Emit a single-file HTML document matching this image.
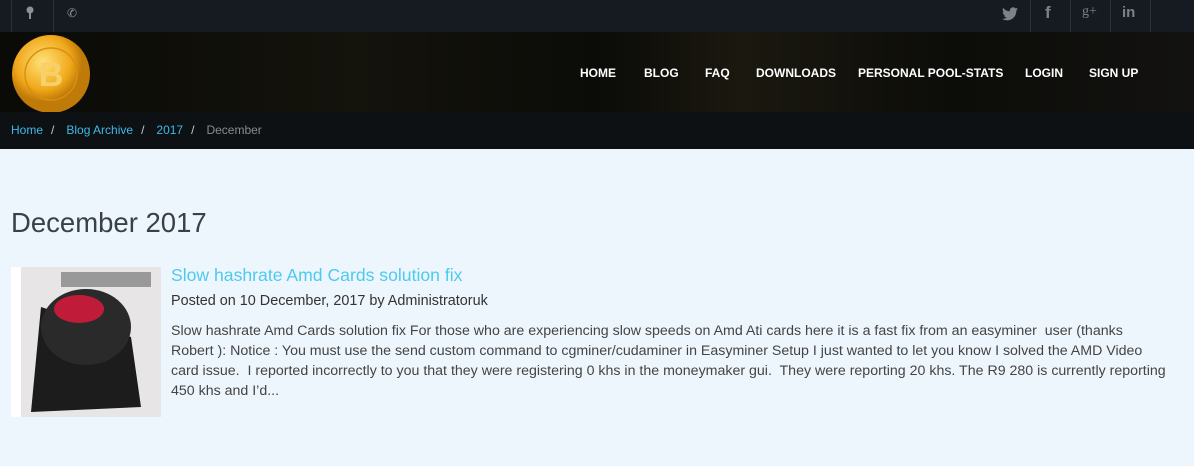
<!DOCTYPE html>
<html><head><meta charset="utf-8"><style>
*{margin:0;padding:0;box-sizing:border-box}
body{width:1194px;height:466px;overflow:hidden;background:#eef6fd;font-family:"Liberation Sans",sans-serif}
.top{position:absolute;left:0;top:0;width:1194px;height:32px;background:#151b20}
.top .s{position:absolute;top:0;height:32px;border-left:1px solid #2a3036}
.hdr{position:absolute;left:0;top:32px;width:1194px;height:80px;background:linear-gradient(90deg,#0a0a07,#14130c 30%,#0b0b08 50%,#1a180f 62%,#0c0c09 80%,#131210);}
.nav{position:absolute;top:34px;font-size:12px;font-weight:bold;color:#fff;}
.bc{position:absolute;left:0;top:112px;width:1194px;height:37px;background:#0e1114;font-size:12px;line-height:37px;padding-left:11px;color:#8a8a8a}
.bc a{color:#3fb8e6;text-decoration:none}
.bc i{font-style:normal;color:#ccc;margin:0 12px 0 8px}
h1{position:absolute;left:11px;top:207px;font-size:27.5px;font-weight:normal;color:#3b4045}
.th{position:absolute;left:11px;top:267px;width:150px;height:150px;background:#fff}
.th div{position:absolute;left:10px;top:0;width:140px;height:150px;background:#e8e5e6}
.t{position:absolute;left:171px;top:265px;font-size:17.6px;color:#4ccaf0}
.m{position:absolute;left:171px;top:293px;font-size:14.4px;color:#333}
.e{position:absolute;left:171px;top:321px;width:1020px;font-size:14.2px;line-height:20px;color:#444;white-space:nowrap}
</style></head><body>
<div class="top">
<div class="s" style="left:11px"></div><div class="s" style="left:53px"></div>
<svg style="position:absolute;left:25px;top:6px" width="10" height="14"><circle cx="5" cy="4" r="3.5" fill="#8b9196"/><rect x="4" y="6" width="2" height="7" fill="#8b9196"/></svg>
<span style="position:absolute;left:67px;top:6px;color:#8b9196;font-size:12px">&#9990;</span>
<div class="s" style="left:1030px"></div><div class="s" style="left:1070px"></div><div class="s" style="left:1110px"></div><div class="s" style="left:1150px"></div>
<svg style="position:absolute;left:1002px;top:7px" width="16" height="14" viewBox="0 0 24 20"><path d="M24 2.4a10 10 0 0 1-2.8.8A5 5 0 0 0 23.3.4a10 10 0 0 1-3.1 1.2A4.9 4.9 0 0 0 11.8 6 14 14 0 0 1 1.7.9a4.9 4.9 0 0 0 1.5 6.6A4.9 4.9 0 0 1 1 6.9a4.9 4.9 0 0 0 3.9 4.9 5 5 0 0 1-2.2.1 4.9 4.9 0 0 0 4.6 3.4A9.9 9.9 0 0 1 0 17.3 14 14 0 0 0 7.5 19.5c9.1 0 14-7.5 14-14v-.6A10 10 0 0 0 24 2.4z" fill="#7d8287"/></svg>
<span style="position:absolute;left:1045px;top:3px;color:#7d8287;font-size:17px;font-weight:bold">f</span>
<span style="position:absolute;left:1082px;top:4px;color:#7d8287;font-size:14px;font-family:'Liberation Serif',serif">g+</span>
<span style="position:absolute;left:1122px;top:4px;color:#7d8287;font-size:15px;font-weight:bold">in</span>
</div>
<div class="hdr">
<svg style="position:absolute;left:11px;top:2px" width="80" height="80"><defs><radialGradient id="g" cx="40%" cy="35%"><stop offset="0" stop-color="#ffe27a"/><stop offset=".7" stop-color="#f0a81a"/><stop offset="1" stop-color="#c07a08"/></radialGradient></defs><circle cx="40" cy="40" r="39" fill="url(#g)"/><circle cx="40" cy="40" r="26" fill="none" stroke="#d98f10" stroke-width="1.5"/><text x="40" y="52" text-anchor="middle" font-size="34" font-weight="bold" fill="#f8d06a" font-family="Liberation Sans">B</text></svg>
<span class="nav" style="left:580px">HOME</span>
<span class="nav" style="left:644px">BLOG</span>
<span class="nav" style="left:705px">FAQ</span>
<span class="nav" style="left:756px">DOWNLOADS</span>
<span class="nav" style="left:858px">PERSONAL POOL-STATS</span>
<span class="nav" style="left:1025px">LOGIN</span>
<span class="nav" style="left:1089px">SIGN UP</span>
</div>
<div class="bc"><a>Home</a><i>/</i><a>Blog Archive</a><i>/</i><a>2017</a><i>/</i>December</div>
<h1>December 2017</h1>
<div class="th"><div><svg width="140" height="150"><polygon points="20,40 110,70 120,140 10,145" fill="#1c1c1c"/><ellipse cx="65" cy="60" rx="45" ry="38" fill="#2a2a2a"/><ellipse cx="58" cy="42" rx="25" ry="14" fill="#c01c3a"/><rect x="40" y="5" width="90" height="15" fill="#999"/></svg></div></div>
<div class="t">Slow hashrate Amd Cards solution fix</div>
<div class="m">Posted on 10 December, 2017 by Administratoruk</div>
<div class="e">Slow hashrate Amd Cards solution fix For those who are experiencing slow speeds on Amd Ati cards here it is a fast fix from an easyminer&nbsp; user (thanks<br>Robert ): Notice : You must use the send custom command to cgminer/cudaminer in Easyminer Setup I just wanted to let you know I solved the AMD Video<br>card issue.&nbsp; I reported incorrectly to you that they were registering 0 khs in the moneymaker gui.&nbsp; They were reporting 20 khs. The R9 280 is currently reporting<br>450 khs and I’d...</div>
</body></html>
